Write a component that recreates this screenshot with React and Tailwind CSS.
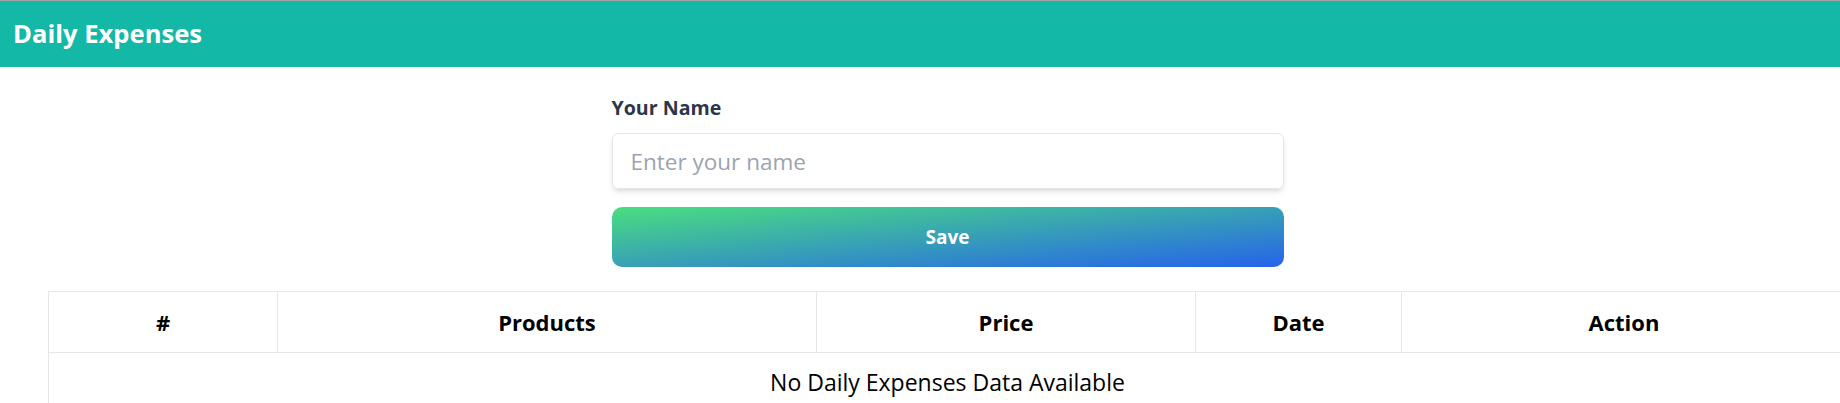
import React from "react";

export default function App() {
  return (
    <div className="w-full min-h-screen overflow-hidden bg-white border-t border-[#a3a3a3]" style={{ fontFamily: '"Open Sans", "Noto Sans", sans-serif' }}>
      <header className="h-[66px] bg-[#14b8a6] flex items-center px-[13px]">
        <h1 className="text-[25.6px] font-bold text-white leading-none">Daily Expenses</h1>
      </header>
      <div className="w-[1895px]">
        <div className="w-[672px] mx-auto pt-[27px]">
          <label className="block text-[19.6px] font-bold text-[#2d3748] leading-[28px]">Your Name</label>
          <input
            type="text"
            placeholder="Enter your name"
            className="mt-[11px] block w-full h-[56px] px-[18px] rounded-md border border-gray-200 shadow-md text-[22.5px] placeholder:text-[#9ca3af] outline-none"
          />
          <button className="mt-[18px] block w-full h-[60px] rounded-[10px] bg-linear-to-br/srgb from-[#4ade80] to-[#2563eb] text-white text-[19px] font-bold">
            Save
          </button>
        </div>
        <div className="px-[48px] mt-[24px]">
          <table className="w-full border-collapse table-fixed text-black">
            <thead>
              <tr className="h-[61px]">
                <th className="w-[229px] border border-[#e5e7eb] text-[22px] font-bold">#</th>
                <th className="w-[539px] border border-[#e5e7eb] text-[22px] font-bold">Products</th>
                <th className="w-[379px] border border-[#e5e7eb] text-[22px] font-bold">Price</th>
                <th className="w-[206px] border border-[#e5e7eb] text-[22px] font-bold">Date</th>
                <th className="border border-[#e5e7eb] text-[22px] font-bold">Action</th>
              </tr>
            </thead>
            <tbody>
              <tr>
                <td colSpan={5} className="border border-[#e5e7eb] text-center text-[23px] h-[60px]">
                  No Daily Expenses Data Available
                </td>
              </tr>
            </tbody>
          </table>
        </div>
      </div>
    </div>
  );
}
